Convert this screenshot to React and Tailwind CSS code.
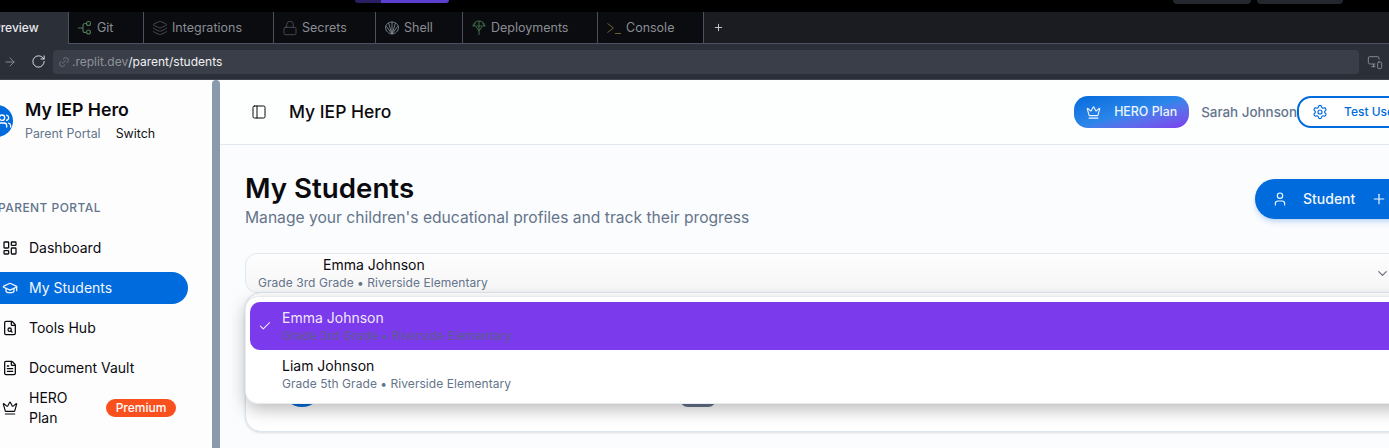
import React from "react";
import { Layers, Lock, Plus, ArrowRight, RotateCw, Link2, MonitorSmartphone, PanelLeft, Crown, Settings, User, LayoutDashboard, GraduationCap, FileSearch, FileText, Check, ChevronDown, Users } from "lucide-react";

const tabs = [
  { label: "Git", w: "w-[75px]", icon: <svg width="16" height="16" viewBox="0 0 16 16" fill="none" stroke="#4f7a57" strokeWidth="1.1"><circle cx="11.5" cy="3.5" r="2"/><circle cx="11.5" cy="12" r="2"/><path d="M1 8h5M9.5 3.5H8a2 2 0 0 0-2 2v5a2 2 0 0 0 2 2h1.5"/></svg> },
  { label: "Integrations", w: "w-[130px]", icon: <Layers size={16} strokeWidth={1} color="#5d626b" /> },
  { label: "Secrets", w: "w-[102px]", icon: <Lock size={16} strokeWidth={1} color="#5d626b" /> },
  { label: "Shell", w: "w-[87px]", icon: <svg width="16" height="16" viewBox="0 0 16 16" fill="none" stroke="#75808c" strokeWidth="1"><path d="M8 14c-3 0-6.500-3-6.500-6.500C1.500 4.500 4.500 2 8 2s6.500 2.500 6.500 5.500C14.500 11 11 14 8 14zM8 14V2M8 14 4.500 3M8 14l3.500-11M8 14 2 6M8 14l6-8"/></svg> },
  { label: "Deployments", w: "w-[135px]", icon: <svg width="16" height="16" viewBox="0 0 16 16" fill="none" stroke="#3f6b4a" strokeWidth="1"><path d="M2 6.500a6 5.500 0 0 1 12 0c-1-1-2-1-3 0-1-1-2-1-3 0-1-1-2-1-3 0-1-1-2-1-3 0zM8 1v14M5 6.500 8 11l3-4.500M4.500 2.500c-.8 1.200-1 2.500-1 3.500M11.500 2.500c.8 1.200 1 2.500 1 3.500"/></svg> },
  { label: "Console", w: "w-[106px]", icon: <svg width="16" height="16" viewBox="0 0 16 16" fill="none" stroke="#6d6033" strokeWidth="1"><path d="m1.500 3.500 6 4.500-6 4.500M9 13.500h6"/></svg> },
];

const nav = [
  { label: "Dashboard", icon: <LayoutDashboard size={16} strokeWidth={1.9} /> },
  { label: "My Students", icon: <GraduationCap size={16} strokeWidth={1.9} />, active: true },
  { label: "Tools Hub", icon: <FileSearch size={16} strokeWidth={1.9} /> },
  { label: "Document Vault", icon: <FileText size={16} strokeWidth={1.9} /> },
];

export default function App() {
  return (
    <div className="w-[1389px] h-[448px] overflow-hidden flex flex-col bg-[#fcfcfe] font-['Inter',sans-serif] text-[#0a0a0f]">
      {/* window strip */}
      <div className="h-3 bg-black flex shrink-0">
        <div className="ml-[355px] w-[26px] h-[3px] bg-[#2a1f63] rounded-bl" />
        <div className="w-[68px] h-[3px] bg-[#5a3fd0] rounded-br" />
        <div className="ml-[724px] w-[78px] h-1 bg-[#24272e] rounded-b" />
        <div className="ml-1.5 w-[86px] h-1 bg-[#24272e] rounded-b" />
      </div>
      {/* tabs */}
      <div className="h-[32px] bg-[#1a1c22] flex shrink-0 text-[12.5px]">
        <div className="w-[69px] h-[32px] bg-[#2b2f38] border-r border-[#4b5160] flex items-center text-[#e8eaee] overflow-hidden">
          <span className="ml-[-7px] text-[12px] font-medium">Preview</span>
        </div>
        {tabs.map((t) => (
          <div key={t.label} className={`${t.w} h-[32px] bg-[#0b0c10] border-r border-b border-[#4b5160] flex items-center pl-2 gap-1 text-[#8a8e94] shrink-0`}>
            {t.icon}
            <span className="pt-[2px]">{t.label}</span>
          </div>
        ))}
        <div className="flex-1 border-b border-[#4b5160] h-[32px] flex items-center pl-[9px]">
          <Plus size={11} color="#cfd2d8" strokeWidth={2} />
        </div>
      </div>
      {/* url */}
      <div className="h-[36px] bg-[#2b2f38] border-b border-[#3e4350] flex items-center shrink-0">
        <ArrowRight size={14} color="#9196a0" className="ml-[3px]" strokeWidth={1.5} />
        <RotateCw size={15} color="#e8eaee" className="ml-[14px]" strokeWidth={1.5} />
        <div className="ml-[7px] w-[1306px] h-6 bg-[#3a3e48] rounded flex items-center pl-[5px] text-xs">
          <Link2 size={12} color="#666b75" className="-rotate-45" />
          <span className="ml-[2px] text-[#8f9399]">.replit.dev</span><span className="text-[#f0f1f3]">/parent/students</span>
        </div>
        <MonitorSmartphone size={16} color="#9196a0" className="ml-2" strokeWidth={1.25} />
      </div>
      {/* app */}
      <div className="flex-1 flex min-h-0">
        {/* sidebar */}
        <aside className="w-[212px] shrink-0 bg-[#fdfdfe] flex flex-col">
          <div className="flex items-center h-[64px] mt-[9px]">
            <div className="w-[32px] h-[32px] ml-[-19px] rounded-full bg-[#006bdc] flex items-center justify-center shrink-0">
              <Users size={16} color="white" className="ml-[14px]" />
            </div>
            <div className="ml-3">
              <div className="text-[17.7px] font-semibold leading-[24px]">My IEP Hero</div>
              <div className="text-[12.4px] leading-[23px] flex"><span className="text-[#64748b]">Parent Portal</span><span className="ml-[15px] text-[#111]">Switch</span></div>
            </div>
          </div>
          <div className="text-xs font-medium tracking-[0.45px] text-[#64748b] mt-[47px] ml-[-2px] h-4 leading-4 whitespace-nowrap">PARENT PORTAL</div>
          <nav className="mt-[16px] flex flex-col gap-2">
            {nav.map((n) => (
              <div key={n.label} className={`h-8 w-[188px] rounded-r-full rounded-l-none flex items-center pl-[2px] gap-[11px] text-sm ${n.active ? "bg-[#006bdc] text-[#f2f7ff]" : ""}`}>
                {n.icon}
                <span>{n.label}</span>
              </div>
            ))}
            <div className="h-8 w-[188px] flex items-center pl-[2px] gap-[11px] text-sm">
              <Crown size={16} strokeWidth={1.75} />
              <span className="leading-[20px] w-[60px]">HERO Plan</span>
              <span className="ml-[6px] bg-[#f9501e] text-white text-xs font-medium rounded-full w-[70px] h-[18px] flex items-center justify-center">Premium</span>
            </div>
          </nav>
        </aside>
        <div className="w-2 shrink-0 bg-[#8a9aad] rounded-t" />
        {/* main */}
        <main className="flex-1 min-w-0 flex flex-col relative bg-[#fbfcfe]">
          <header className="h-[65px] shrink-0 bg-[#fdfefe] border-b border-[#e2e8f0] flex items-center">
            <PanelLeft size={16} strokeWidth={1.5} className="ml-[31px]" />
            <h2 className="ml-[22px] text-[17.5px] font-medium whitespace-nowrap">My IEP Hero</h2>
            <div className="ml-auto flex items-center mr-[-80px]">
              <div className="w-[115px] h-8 rounded-[14px] bg-gradient-to-br from-[#006bdc] via-[#2b86ea] to-[#7c3aed] text-[#eef4ff] text-[12.4px] font-medium flex items-center pl-[12px] gap-[13px]">
                <Crown size={15} strokeWidth={1.75} />
                <span>HERO Plan</span>
              </div>
              <span className="ml-3 text-[13.4px] text-[#64748b] font-medium whitespace-nowrap">Sarah Johnson</span>
              <div className="w-[172px] h-8 border-2 border-[#006bdc] rounded-[14px] bg-white text-[#006bdc] text-xs font-medium flex items-center pl-[13px] gap-[16px] whitespace-nowrap">
                <Settings size={16} strokeWidth={1.75} />
                <span>Test User</span>
              </div>
            </div>
          </header>
          <section className="flex-1 pl-[25px] relative">
            <div className="flex items-start justify-between pt-[25px]">
              <div>
                <h1 className="text-[27.7px] leading-[36px] font-semibold">My Students</h1>
                <p className="text-[15.63px] text-[#64748b] leading-[22px] pt-[1px]">Manage your children's educational profiles and track their progress</p>
              </div>
              <div className="mt-[9px] mr-[-40px] w-[174px] h-10 rounded-[20px] bg-[#006bdc] text-[#f2f7ff] text-sm font-medium flex items-center pl-[17px] shadow-md shadow-[#006bdc33]">
                <User size={16} strokeWidth={1.75} />
                <span className="ml-[15px]">Student</span>
                <Plus size={16} className="ml-[16px]" strokeWidth={1.75} />
              </div>
            </div>
            {/* select trigger */}
            <div className="mt-[24px] mr-[-30px] h-[40px] rounded-[12px] border border-[#e2e8f0] bg-gradient-to-b from-[#fdfdfd] to-[#f6f6f7] relative">
              <div className="absolute left-[77px] top-[1px] text-sm leading-5">Emma Johnson</div>
              <div className="absolute left-3 top-[21px] text-xs leading-4 tracking-[0.05px] text-[#64748b]">Grade 3rd Grade • Riverside Elementary</div>
              <ChevronDown size={15} color="#6b7280" className="absolute left-[1129px] top-[12px]" />
            </div>
            {/* student card under the menu */}
            <div className="h-[140px] mt-[-1px] mr-[-30px] rounded-[16px] border border-[#dde5ef] bg-white relative shadow-sm overflow-hidden">
              <div className="absolute left-[36px] top-[74px] w-[40px] h-[40px] rounded-full bg-[#006bdc]" />
              <div className="absolute left-[434px] top-[90px] w-[36px] h-[24px] rounded-lg bg-[#64748b]" />
            </div>
            {/* open menu */}
            <div className="absolute left-[26px] top-[152px] w-[1180px] h-[106px] bg-white rounded-[12px] pt-[5px] px-1 shadow-[0_0_0_1px_#e8ecf1,0_6px_18px_rgba(0,0,0,0.28)]">
              <div className="h-12 bg-[#7c3aed] rounded-l-[10px] relative">
                <Check size={14} color="white" className="absolute left-[8px] top-[17px]" strokeWidth={1.75} />
                <div className="absolute left-8 top-[6px] text-sm leading-5 text-[#efe8fd]">Emma Johnson</div>
                <div className="absolute left-8 top-[26px] text-xs leading-4 tracking-[0.05px] text-[#5c5f8c] whitespace-nowrap">Grade 3rd Grade • Riverside Elementary</div>
              </div>
              <div className="h-12 relative">
                <div className="absolute left-8 top-[6px] text-sm leading-5">Liam Johnson</div>
                <div className="absolute left-8 top-[26px] text-xs leading-4 tracking-[0.05px] text-[#64748b] whitespace-nowrap">Grade 5th Grade • Riverside Elementary</div>
              </div>
            </div>
          </section>
        </main>
      </div>
    </div>
  );
}
